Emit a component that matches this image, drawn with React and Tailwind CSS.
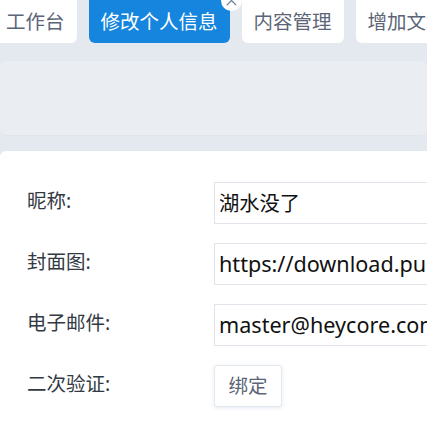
import React from 'react';

const font = { fontFamily: '"Noto Sans", "Noto Sans CJK SC", sans-serif' };

const tabs = [
  { label: '工作台' },
  { label: '修改个人信息', active: true },
  { label: '内容管理' },
  { label: '增加文章' },
];

const fields = [
  { label: '昵称:', value: '湖水没了', size: 'text-[20.3px]' },
  { label: '封面图:', value: 'https://download.pub/cover/avatar.png', size: 'text-[21.6px]' },
  { label: '电子邮件:', value: 'master@heycore.com', size: 'text-[21.6px]' },
];

function Tab({ label, active }) {
  return (
    <div
      className={
        'relative shrink-0 h-[43px] px-[12px] flex items-center rounded-b-[6px] text-[19.5px] whitespace-nowrap ' +
        (active ? 'bg-[#1585dd] text-white' : 'bg-white text-[#5b6577]')
      }
    >
      {label}
      {active && (
        <span className="absolute -right-[12px] -top-[10.5px] w-[21px] h-[21px] rounded-full bg-white flex items-center justify-center">
          <svg width="11" height="11" viewBox="0 0 12 12" fill="none" stroke="#6b7a90" strokeWidth="1.4">
            <path d="M1 1l10 10M11 1L1 11" />
          </svg>
        </span>
      )}
    </div>
  );
}

export default function App() {
  return (
    <div className="w-[427px] h-[435px] overflow-hidden bg-[#e4e9ef]" style={font}>
      {/* tabs */}
      <div className="flex gap-[12px] -ml-[6px]">
        {tabs.map((t) => (
          <Tab key={t.label} {...t} />
        ))}
      </div>

      <div className="mt-[18px] h-[75px] rounded-[6px] bg-[#eaeef3] border-b border-[#e1e6ed]" />

      {/* form card */}
      <div className="mt-[15px] h-[300px] rounded-tl-[6px] bg-white pt-[31px]">
        <div className="flex flex-col gap-[19px]">
          {fields.map((f) => (
            <div key={f.label} className="flex items-start">
              <div className="w-[214px] shrink-0 pl-[27px] leading-[38px] text-[19.5px] text-[#333a44]">{f.label}</div>
              <div className={'flex-1 h-[42px] border border-r-0 border-[#dfe3ea] pl-[4px] flex items-center text-[#111] whitespace-nowrap overflow-hidden ' + f.size}>
                {f.value}
              </div>
            </div>
          ))}
          <div className="flex items-start">
            <div className="w-[214px] shrink-0 pl-[27px] leading-[38px] text-[19.5px] text-[#333a44]">二次验证:</div>
            <button className="w-[68px] h-[42px] rounded-[3px] border border-[#e3e7ee] bg-white shadow-[0_1px_4px_rgba(60,80,140,0.12)] text-[19.5px] text-[#5b6577]">
              绑定
            </button>
          </div>
        </div>
      </div>
    </div>
  );
}
